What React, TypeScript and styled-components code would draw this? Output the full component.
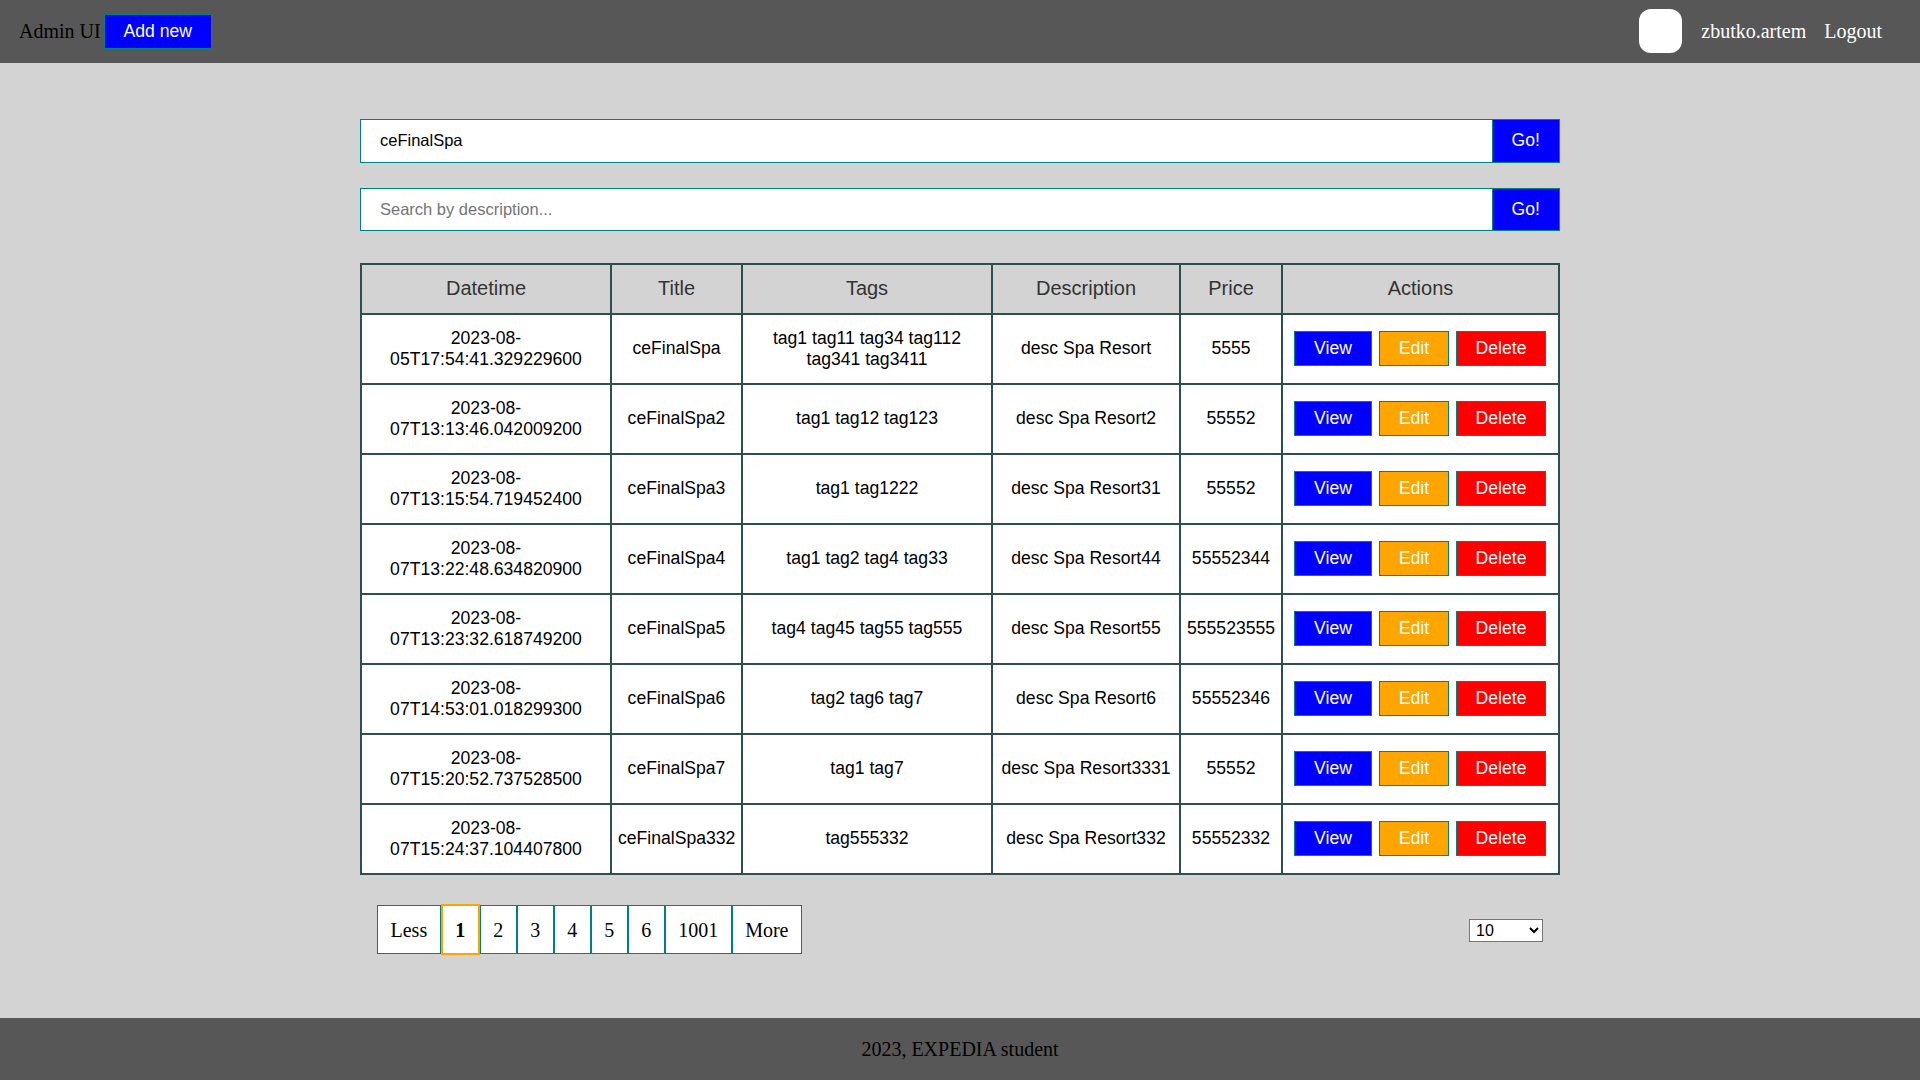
import React from "react";
import styled, { createGlobalStyle } from "styled-components";

const rows = [
    { datetime: "2023-08-05T17:54:41.329229600", title: "ceFinalSpa", tags: "tag1 tag11 tag34 tag112 tag341 tag3411", description: "desc Spa Resort", price: "5555" },
    { datetime: "2023-08-07T13:13:46.042009200", title: "ceFinalSpa2", tags: "tag1 tag12 tag123", description: "desc Spa Resort2", price: "55552" },
    { datetime: "2023-08-07T13:15:54.719452400", title: "ceFinalSpa3", tags: "tag1 tag1222", description: "desc Spa Resort31", price: "55552" },
    { datetime: "2023-08-07T13:22:48.634820900", title: "ceFinalSpa4", tags: "tag1 tag2 tag4 tag33", description: "desc Spa Resort44", price: "55552344" },
    { datetime: "2023-08-07T13:23:32.618749200", title: "ceFinalSpa5", tags: "tag4 tag45 tag55 tag555", description: "desc Spa Resort55", price: "555523555" },
    { datetime: "2023-08-07T14:53:01.018299300", title: "ceFinalSpa6", tags: "tag2 tag6 tag7", description: "desc Spa Resort6", price: "55552346" },
    { datetime: "2023-08-07T15:20:52.737528500", title: "ceFinalSpa7", tags: "tag1 tag7", description: "desc Spa Resort3331", price: "55552" },
    { datetime: "2023-08-07T15:24:37.104407800", title: "ceFinalSpa332", tags: "tag555332", description: "desc Spa Resort332", price: "55552332" },
];

const columns = [
    { name: "Datetime", width: 250 },
    { name: "Title", width: 131 },
    { name: "Tags", width: 250 },
    { name: "Description", width: 188 },
    { name: "Price", width: 102 },
    { name: "Actions", width: 277 },
];

const pages = ["Less", "1", "2", "3", "4", "5", "6", "1001", "More"];

const App = () => {
    return (
        <Page>
            <GlobalStyle />
            <Header>
                <HeaderLeft>
                    <Brand>Admin UI</Brand>
                    <ActionButton $color="blue" $width={108}>Add new</ActionButton>
                </HeaderLeft>
                <HeaderRight>
                    <Avatar />
                    <HeaderLink>zbutko.artem</HeaderLink>
                    <HeaderLink>Logout</HeaderLink>
                </HeaderRight>
            </Header>
            <Main>
                <SearchForm>
                    <SearchInput defaultValue="ceFinalSpa" />
                    <GoButton>Go!</GoButton>
                </SearchForm>
                <SearchForm>
                    <SearchInput placeholder="Search by description..." />
                    <GoButton>Go!</GoButton>
                </SearchForm>
                <Table>
                    <colgroup>
                        {columns.map((column) => (
                            <Column key={column.name} $width={column.width} />
                        ))}
                    </colgroup>
                    <thead>
                        <tr>
                            {columns.map((column) => (
                                <HeadCell key={column.name}>{column.name}</HeadCell>
                            ))}
                        </tr>
                    </thead>
                    <tbody>
                        {rows.map((row) => (
                            <tr key={row.title}>
                                <Cell>{row.datetime}</Cell>
                                <Cell>{row.title}</Cell>
                                <Cell>{row.tags}</Cell>
                                <Cell>{row.description}</Cell>
                                <Cell>{row.price}</Cell>
                                <Cell>
                                    <Actions>
                                        <ActionButton $color="blue" $width={78}>View</ActionButton>
                                        <ActionButton $color="orange" $width={70}>Edit</ActionButton>
                                        <ActionButton $color="red" $width={90}>Delete</ActionButton>
                                    </Actions>
                                </Cell>
                            </tr>
                        ))}
                    </tbody>
                </Table>
                <Controls>
                    <Pagination>
                        {pages.map((page) => (
                            <PageItem key={page} $active={page === "1"}>{page}</PageItem>
                        ))}
                    </Pagination>
                    <PageSize defaultValue="10">
                        <option value="10">10</option>
                        <option value="20">20</option>
                        <option value="50">50</option>
                    </PageSize>
                </Controls>
            </Main>
            <Footer>2023, EXPEDIA student</Footer>
        </Page>
    );
};

const GlobalStyle = createGlobalStyle`
    * {
        box-sizing: border-box;
    }
    body {
        margin: 0;
        background-color: #d3d3d3;
        font-family: "Liberation Serif", "Times New Roman", serif;
    }
`;

const Page = styled.div`
    min-height: 100vh;
    display: flex;
    flex-direction: column;
`;

const Header = styled.header`
    height: 63px;
    display: flex;
    align-items: center;
    justify-content: space-between;
    padding: 0 38px 0 19px;
    background-color: #575757;
`;

const HeaderLeft = styled.div`
    display: flex;
    align-items: center;
    gap: 3px;
`;

const Brand = styled.span`
    font-size: 20px;
    color: #000;
`;

const HeaderRight = styled.div`
    display: flex;
    align-items: center;
    gap: 18px;
`;

const Avatar = styled.div`
    width: 43px;
    height: 44px;
    margin: 0 1px 1px 0;
    border-radius: 12px;
    background-color: #fff;
`;

const HeaderLink = styled.a`
    font-size: 20px;
    color: #fff;
`;

const ActionButton = styled.button<{ $color: string; $width: number }>`
    width: ${(props) => props.$width}px;
    height: 35px;
    padding: 0;
    border: 1px solid teal;
    background-color: ${(props) => props.$color};
    color: #fff;
    font-family: "Liberation Sans", Arial, sans-serif;
    font-size: 17.6px;
`;

const Main = styled.main`
    flex: 1;
    width: 1200px;
    margin: 0 auto;
    padding-top: 56px;
`;

const SearchForm = styled.form`
    height: 43.6px;
    display: flex;
    margin-bottom: 25.1px;
`;

const SearchInput = styled.input`
    flex: 1;
    min-width: 0;
    padding: 0 19px;
    border: 1px solid teal;
    border-right: none;
    outline: none;
    background-color: #fff;
    color: #000;
    font-family: "Liberation Sans", Arial, sans-serif;
    font-size: 16.5px;

    &::placeholder {
        color: #757575;
    }
`;

const GoButton = styled.button`
    width: 68.5px;
    padding: 0;
    border: 1px solid teal;
    background-color: blue;
    color: #fff;
    font-family: "Liberation Sans", Arial, sans-serif;
    font-size: 17.6px;
`;

const Table = styled.table`
    width: 1200px;
    margin-top: 32px;
    table-layout: fixed;
    border-collapse: collapse;
    font-family: "Liberation Sans", Arial, sans-serif;
`;

const Column = styled.col<{ $width: number }>`
    width: ${(props) => props.$width}px;
`;

const HeadCell = styled.th`
    height: 50px;
    padding: 0 0 2px;
    border: 2px solid #2f4f4f;
    color: #333;
    font-size: 20px;
    font-weight: 400;
`;

const Cell = styled.td`
    height: 70px;
    padding: 0 6px 1px;
    border: 2px solid #2f4f4f;
    background-color: #fff;
    color: #000;
    font-size: 17.6px;
    text-align: center;
`;

const Actions = styled.div`
    display: flex;
    justify-content: center;
    gap: 7px;
    padding: 0 1px 1px 0;
`;

const Controls = styled.div`
    display: flex;
    align-items: center;
    justify-content: space-between;
    margin-top: 29px;
    padding: 0 17px;
`;

const Pagination = styled.div`
    display: flex;
    align-items: center;
`;

const PageItem = styled.a<{ $active: boolean }>`
    padding: 13px 12.5px 11px;
    border: ${(props) => (props.$active ? "2px solid orange" : "1px solid teal")};
    background-color: #fff;
    color: #000;
    font-size: 20px;
    font-weight: ${(props) => (props.$active ? 700 : 400)};
`;

const PageSize = styled.select`
    width: 74px;
    height: 23px;
    margin-top: 2px;
    padding-left: 2px;
    font-family: "Liberation Sans", Arial, sans-serif;
    font-size: 16px;
    background-color: #fff;
`;

const Footer = styled.footer`
    height: 62px;
    display: flex;
    align-items: center;
    justify-content: center;
    background-color: #575757;
    color: #000;
    font-size: 20px;
`;

export default App;
